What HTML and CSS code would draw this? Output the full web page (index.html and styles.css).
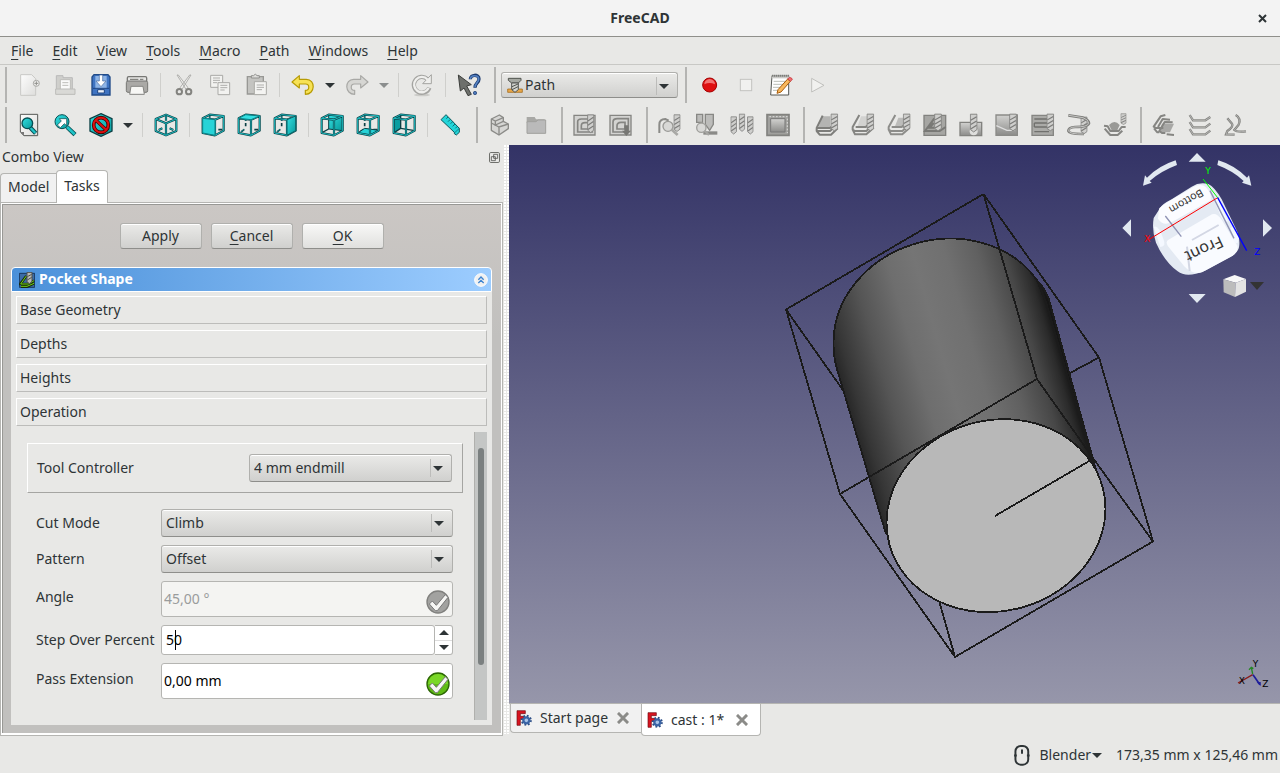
FILE: index.html
```html
<!DOCTYPE html>
<html lang="en">
<head>
<meta charset="utf-8">
<title>FreeCAD</title>
<link rel="stylesheet" href="styles.css">
</head>
<body>
<svg class="defs" aria-hidden="true">
  <defs>
    <linearGradient id="teal" x1="0" y1="0" x2="1" y2="1"><stop offset="0" stop-color="#34e0e2"/><stop offset="1" stop-color="#06989a"/></linearGradient>
    <linearGradient id="metal" x1="0" y1="0" x2="0" y2="1"><stop offset="0" stop-color="#d2d2d0"/><stop offset="1" stop-color="#8c8c8a"/></linearGradient>
    <linearGradient id="paper" x1="0" y1="0" x2="1" y2="1"><stop offset="0" stop-color="#fdfdfd"/><stop offset="1" stop-color="#dededc"/></linearGradient>
    <linearGradient id="bodyShade" gradientUnits="userSpaceOnUse" x1="831" y1="356" x2="1045" y2="294">
      <stop offset="0" stop-color="#242424"/><stop offset=".06" stop-color="#363636"/><stop offset=".2" stop-color="#555"/><stop offset=".36" stop-color="#6e6e6e"/><stop offset=".48" stop-color="#757575"/><stop offset=".62" stop-color="#707070"/><stop offset=".76" stop-color="#606060"/><stop offset=".88" stop-color="#474747"/><stop offset=".96" stop-color="#2b2b2b"/><stop offset="1" stop-color="#161616"/>
    </linearGradient>
    <symbol id="frame" viewBox="0 0 72 72">
      <g fill="none" stroke-linejoin="round">
        <path stroke="#0b3f44" stroke-width="6.5" d="M5 16L42 20V67L5 60ZM5 16L26 5L68 9L42 20M68 9V53L42 67"/>
        <path stroke="#1fc4c8" stroke-width="2.8" d="M5 16L42 20V67L5 60ZM5 16L26 5L68 9L42 20M68 9V53L42 67"/>
      </g>
    </symbol>
    <symbol id="rear" viewBox="0 0 72 72">
      <path fill="none" stroke="#0b3f44" stroke-width="5" d="M26 8V24M12 57L22 49M52 50H64M26 30V40"/>
      <path fill="none" stroke="#1fc4c8" stroke-width="1.5" d="M26 8V24M12 57L22 49"/>
    </symbol>
    <symbol id="mill" viewBox="0 0 24 72" preserveAspectRatio="none">
      <path d="M2 4H22V54L12 62L2 54Z" fill="#cfcfcd" stroke="#848482" stroke-width="3"/>
      <path d="M3 24L21 12M3 38L21 26M3 52L21 40" stroke="#7d7d7b" stroke-width="4"/>
    </symbol>
    <symbol id="logo" viewBox="0 0 48 48">
      <path d="M3 2H28V11H13V19H24V28H13V46H3Z" fill="#d81420" stroke="#6d0a10" stroke-width="2"/>
      <circle cx="31" cy="31" r="13" fill="none" stroke="#2c4d84" stroke-width="7" stroke-dasharray="5 5.2"/>
      <circle cx="31" cy="31" r="9" fill="#a9c4e8" stroke="#3a64a5" stroke-width="7"/>
    </symbol>
    <symbol id="cross" viewBox="0 0 36 36"><path d="M6 6L30 30M30 6L6 30" stroke="#8b8b88" stroke-width="9" stroke-linecap="square"/></symbol>
    <symbol id="tick" viewBox="0 0 72 72"><path d="M10 42L19 33L31 46L58 14L66 22L34 62H28Z" fill="#f6f6f4" stroke="#777" stroke-width="3"/></symbol>
  </defs>
</svg>

<header class="titlebar"><h1>FreeCAD</h1><button class="close" aria-label="Close"><svg viewBox="0 0 9 9"><path d="M1 1L8 8M8 1L1 8" stroke="#2e3436" stroke-width="2"/></svg></button></header>

<nav class="menubar">
  <button><u>F</u>ile</button><button><u>E</u>dit</button><button><u>V</u>iew</button><button><u>T</u>ools</button><button><u>M</u>acro</button><button><u>P</u>ath</button><button><u>W</u>indows</button><button><u>H</u>elp</button>
</nav>

<div class="toolbar">
  <i class="handle"></i>
  <button aria-label="New"><svg viewBox="0 0 72 72"><path d="M11 5H44L56 17V67H11Z" fill="url(#paper)" stroke="#c9c9c6" stroke-width="3"/><circle cx="58" cy="31" r="9" fill="#f4f4f2" stroke="#a5a5a2" stroke-width="3"/><path d="M58 25V37M52 31H64" stroke="#8d8d8a" stroke-width="3"/></svg></button>
  <button aria-label="Open"><svg viewBox="0 0 72 72"><path d="M10 8H30V14H58V50H10Z" fill="#cfcfcc" stroke="#bababa" stroke-width="3"/><path d="M22 20H52V50H22Z" fill="#fafafa" stroke="#bdbdba" stroke-width="3"/><path d="M28 29H46M28 37H46" stroke="#bdbdba" stroke-width="3"/><path d="M8 48H66V64H8Z" fill="#d9d9d6" stroke="#bcbcb9" stroke-width="3"/></svg></button>
  <button aria-label="Save"><svg viewBox="0 0 72 72"><path d="M15 5H57L63 12V66H9V12Z" fill="#3f74c2" stroke="#204a87" stroke-width="4"/><path d="M19 9H53V47H19Z" fill="#8db4e6"/><path d="M31 6H41V24H51L36 41L21 24H31Z" fill="#fff" stroke="#4a6b9e" stroke-width="2"/><path d="M12 46H60" stroke="#1d4481" stroke-width="3"/><path d="M26 50H46V60H26Z" fill="#edf2fa" stroke="#1d4481" stroke-width="3"/></svg></button>
  <button aria-label="Print"><svg viewBox="0 0 72 72"><rect x="7" y="11" width="58" height="16" rx="4" fill="#e4e4e2" stroke="#777774" stroke-width="4"/><rect x="4" y="24" width="64" height="34" rx="5" fill="#aaa9a6" stroke="#777774" stroke-width="3"/><path d="M15 19H40M45 19H55" stroke="#70706d" stroke-width="3"/><path d="M18 40H54L58 64H14Z" fill="#f7f7f5" stroke="#858582" stroke-width="3"/></svg></button>
  <i class="sep"></i>
  <button aria-label="Cut"><svg viewBox="0 0 72 72"><path d="M15 6L42 49L48 44L19 6ZM57 6L30 49L24 44L53 6Z" fill="#efefed" stroke="#a5a5a2" stroke-width="2.5"/><g fill="none" stroke="#83837f" stroke-width="6"><circle cx="22" cy="56" r="8"/><circle cx="50" cy="56" r="8"/></g></svg></button>
  <button aria-label="Copy"><svg viewBox="0 0 72 72"><g fill="#f2f2f0" stroke="#a9a9a6" stroke-width="3"><path d="M8 7H44V43H8Z"/><path d="M30 29H65V65H30Z"/></g><path d="M15 15H36M15 22H36M15 29H28M37 37H58M37 44H58M37 51H50" stroke="#aeaeab" stroke-width="3"/></svg></button>
  <button aria-label="Paste"><svg viewBox="0 0 72 72"><path d="M10 11H58V63H10Z" fill="#c4c4c1" stroke="#989895" stroke-width="4"/><path d="M22 15V8H29L34 3L39 8H46V15Z" fill="#dededb" stroke="#8f8f8c" stroke-width="3"/><path d="M31 26H67V65H31Z" fill="#f4f4f2" stroke="#aaaaa7" stroke-width="3"/><path d="M38 36H60M38 43H60M38 50H54" stroke="#aeaeab" stroke-width="3"/></svg></button>
  <i class="sep"></i>
  <button aria-label="Undo"><svg viewBox="0 0 72 72"><path d="M3 27L25 8V19H46C74 19 74 64 43 64V52C57 52 56 33 44 33H25V45Z" fill="#f7e256" stroke="#b79b04" stroke-width="3.5" stroke-linejoin="round"/></svg></button>
  <button class="drop" aria-label="Undo list"><i class="tri"></i></button>
  <button aria-label="Redo"><svg viewBox="0 0 72 72"><path d="M69 27L47 8V19H26C-2 19 -2 64 29 64V52C15 52 16 33 28 33H47V45Z" fill="#d6d6d3" stroke="#a8a8a5" stroke-width="3.5" stroke-linejoin="round"/></svg></button>
  <button class="drop dim" aria-label="Redo list"><i class="tri"></i></button>
  <i class="sep"></i>
  <button aria-label="Refresh"><svg viewBox="0 0 72 72"><ellipse cx="36" cy="66" rx="24" ry="4" fill="#cbcbc8"/><path d="M58 44A24 24 0 1 1 52 18" fill="none" stroke="#a4a4a1" stroke-width="13"/><path d="M64 5V32H38Z" fill="#efefed" stroke="#a4a4a1" stroke-width="3"/><path d="M56 45A23 23 0 1 1 53 20" fill="none" stroke="#efefed" stroke-width="7"/></svg></button>
  <i class="sep"></i>
  <button aria-label="What's this?"><svg viewBox="0 0 72 72"><path d="M4 6L43 35L29 39L43 64L33 68L21 45L10 54Z" fill="#6e706c" stroke="#3c3e3b" stroke-width="3"/><path d="M40 19C40 3 66 3 66 18C66 30 54 30 54 44" fill="none" stroke="#1c3a6e" stroke-width="10"/><path d="M40 18C41 5 65 5 65 18C65 29 54 30 54 43" fill="none" stroke="#5583c4" stroke-width="5"/><circle cx="54" cy="60" r="5" fill="#4a78bb" stroke="#1c3a6e" stroke-width="2"/></svg></button>
  <i class="handle"></i>
  <span class="combo workbench">
    <svg class="combo-icon" viewBox="0 0 48 48"><path d="M4 4H42V10L34 18H14L4 10Z" fill="#a5a8a2" stroke="#50534e" stroke-width="3"/><path d="M2 36H46V46H2Z" fill="#e9a94a" stroke="#9a5d0b" stroke-width="2"/><path d="M14 18H34V38L24 46L14 38Z" fill="#d3d5d0" stroke="#555753" stroke-width="3"/><path d="M15 29L33 21M15 38L33 29" stroke="#50534e" stroke-width="3"/></svg>
    <select aria-label="Workbench"><option>Path</option></select><i class="tri"></i>
  </span>
  <i class="handle"></i>
  <button aria-label="Record macro"><svg viewBox="0 0 72 72"><circle cx="38" cy="36" r="21" fill="#df0f10" stroke="#a40000" stroke-width="3"/><path d="M22 34A16 16 0 0 1 54 34Q38 26 22 34Z" fill="#f37373"/></svg></button>
  <button aria-label="Stop macro"><svg viewBox="0 0 72 72"><rect x="22" y="19" width="34" height="34" fill="#f1f1ef" stroke="#c3c3c0" stroke-width="3"/></svg></button>
  <button aria-label="Macros"><svg viewBox="0 0 72 72"><path d="M9 8H59V66H5Z" fill="#fff" stroke="#555753" stroke-width="3"/><path d="M8 6H60V16H8Z" fill="#cacac7"/><path d="M10 8H60" stroke="#555753" stroke-width="6" stroke-dasharray="3 3"/><path d="M14 25H50M13 34H42M12 43H34M12 52H28" stroke="#babdb6" stroke-width="3"/><path d="M27 50L56 18L64 25L36 57L24 61Z" fill="#f8b85d" stroke="#a85c0c" stroke-width="3"/><path d="M56 18L61 13Q70 14 70 20L64 25Z" fill="#ee6d72" stroke="#bf3035" stroke-width="2"/></svg></button>
  <button aria-label="Execute macro"><svg viewBox="0 0 72 72"><path d="M20 16V57L57 37Z" fill="#f1f1ef" stroke="#c0c0bd" stroke-width="3"/></svg></button>
</div>

<div class="toolbar">
  <i class="handle"></i>
  <button aria-label="Fit all"><svg viewBox="0 0 72 72"><path d="M10 4H62V68H21L10 57Z" fill="url(#paper)" stroke="#555753" stroke-width="3"/><path d="M10 57H21V68Z" fill="#777"/><path d="M38 42L56 61" stroke="#064f53" stroke-width="13"/><path d="M38 42L55 60" stroke="#1fc4c8" stroke-width="7"/><circle cx="31" cy="31" r="16" fill="url(#teal)" stroke="#064f53" stroke-width="4"/></svg></button>
  <button aria-label="Fit selection"><svg viewBox="0 0 72 72"><path d="M42 42L66 65" stroke="#064f53" stroke-width="13"/><path d="M42 42L65 64" stroke="#1fc4c8" stroke-width="8"/><circle cx="27" cy="26" r="21" fill="url(#teal)" stroke="#064f53" stroke-width="3"/><path d="M13 36L25 24L19 17H41V38L34 32L22 44Z" fill="#fff" stroke="#0b3f44" stroke-width="2"/></svg></button>
  <button aria-label="Draw style"><svg viewBox="0 0 72 72"><path d="M36 2L69 17V54L36 70L3 54V17Z" fill="url(#teal)" stroke="#0b3f44" stroke-width="4"/><g fill="none"><circle cx="36" cy="36" r="22" stroke="#450000" stroke-width="11"/><path d="M20 21L52 51" stroke="#450000" stroke-width="10"/><circle cx="36" cy="36" r="22" stroke="#dc1010" stroke-width="6"/><path d="M20 21L52 51" stroke="#dc1010" stroke-width="6"/></g></svg></button>
  <button class="drop" aria-label="Draw styles"><i class="tri"></i></button>
  <i class="sep"></i>
  <button aria-label="Isometric"><svg viewBox="0 0 72 72"><g fill="none" stroke-linejoin="round"><path stroke="#0b3f44" stroke-width="6.5" d="M36 5L67 18V54L36 67L5 54V18ZM5 18L36 31L67 18M36 31V67M36 9V23M14 51L25 46M58 51L47 46"/><path stroke="#1fc4c8" stroke-width="2.8" d="M36 5L67 18V54L36 67L5 54V18ZM5 18L36 31L67 18M36 31V67M36 9V23M14 51L25 46M58 51L47 46"/></g></svg></button>
  <i class="sep"></i>
  <button aria-label="Front"><svg viewBox="0 0 72 72"><use href="#rear"/><use href="#frame"/><path d="M5 16L42 20V67L5 60Z" fill="#27d3d7" stroke="#0c7f83" stroke-width="3"/></svg></button>
  <button aria-label="Top"><svg viewBox="0 0 72 72"><use href="#rear"/><use href="#frame"/><path d="M5 16L26 5L68 9L42 20Z" fill="#34e0e2" stroke="#0c7f83" stroke-width="3"/></svg></button>
  <button aria-label="Right"><svg viewBox="0 0 72 72"><use href="#rear"/><use href="#frame"/><path d="M42 20L68 9V53L42 67Z" fill="url(#teal)" stroke="#0b5f63" stroke-width="3"/></svg></button>
  <i class="sep"></i>
  <button aria-label="Rear"><svg viewBox="0 0 72 72"><path d="M26 6L68 9V53L26 48Z" fill="url(#teal)" stroke="#0b3f44" stroke-width="3"/><path d="M6 59L26 48" stroke="#0b3f44" stroke-width="4"/><use href="#frame"/></svg></button>
  <button aria-label="Bottom"><svg viewBox="0 0 72 72"><use href="#rear"/><path d="M5 60L26 46L68 52L42 67Z" fill="#27d3d7" stroke="#0b3f44" stroke-width="3"/><use href="#frame"/></svg></button>
  <button aria-label="Left"><svg viewBox="0 0 72 72"><path d="M5 16L26 6V46L5 60Z" fill="#0a9ea1" stroke="#0b3f44" stroke-width="4"/><path d="M26 46L64 52" stroke="#0b3f44" stroke-width="4"/><use href="#frame"/></svg></button>
  <i class="sep"></i>
  <button aria-label="Measure distance"><svg viewBox="0 0 72 72"><path d="M6 20L21 5L61 46V58L52 66L46 62V58Z" fill="#23d5d9" stroke="#0b5b60" stroke-width="3" stroke-linejoin="round"/><path d="M27 12L22 17M34 19L27 26M41 26L35 32M48 33L41 40M55 40L49 46" stroke="#0b5b60" stroke-width="2.5"/><path d="M61 46L46 60" stroke="#0b5b60" stroke-width="2"/></svg></button>
  <i class="handle"></i>
  <button aria-label="Part"><svg viewBox="0 0 72 72"><path d="M10 18L34 6L46 14V25L61 33V47L33 66L10 52Z" fill="#d6d6d4" stroke="#8b8b88" stroke-width="4" stroke-linejoin="round"/><path d="M10 30L33 42L61 33M33 42V65M10 18L22 24L46 14M22 24V36L46 25" fill="none" stroke="#8b8b88" stroke-width="4"/></svg></button>
  <button aria-label="Group"><svg viewBox="0 0 72 72"><path d="M8 12H32L36 19H62V30H8Z" fill="#a8a8a5"/><path d="M9 26H36L42 21H65V61H9Z" fill="#bababa" stroke="#a0a09d" stroke-width="3"/></svg></button>
  <i class="handle"></i>
  <button aria-label="Path job"><svg viewBox="0 0 72 72"><path d="M3 7H66V66H3Z" fill="#d3d3d1" stroke="#858582" stroke-width="4"/><path d="M14 57V26Q14 18 25 18H58V57ZM25 48V38Q25 29 36 29H48V48Z" fill="none" stroke="#858582" stroke-width="5"/><use href="#mill" x="42" y="2" width="22" height="66"/></svg></button>
  <button aria-label="Export job"><svg viewBox="0 0 72 72"><path d="M3 7H66V66H3Z" fill="#d3d3d1" stroke="#858582" stroke-width="4"/><path d="M12 57V27Q12 17 25 17H58V57ZM24 48V39Q24 28 36 28H48V48Z" fill="none" stroke="#858582" stroke-width="5"/><path d="M46 37H58V53H66L52 69L39 53H46Z" fill="#777774"/></svg></button>
  <i class="handle"></i>
  <button aria-label="Inspect"><svg viewBox="0 0 72 72"><path d="M4 60V35Q4 18 22 18L32 23" fill="none" stroke="#8a8a87" stroke-width="6"/><use href="#mill" x="46" y="2" width="22" height="62"/><circle cx="30" cy="40" r="15" fill="#d8d8d6" stroke="#9a9a97" stroke-width="4"/><path d="M40 49L59 66" stroke="#a8a8a5" stroke-width="8"/></svg></button>
  <button aria-label="Simulate"><svg viewBox="0 0 72 72"><path d="M8 4H26V28H8ZM34 4H58V34L47 52L34 34Z" fill="#bcbcba" stroke="#888885" stroke-width="4"/><path d="M28 60H70" stroke="#8a8a87" stroke-width="10"/><circle cx="22" cy="44" r="14" fill="#d8d8d6" stroke="#a0a09d" stroke-width="4"/><path d="M31 53L45 66" stroke="#a6a6a3" stroke-width="7"/></svg></button>
  <button aria-label="Tools"><svg viewBox="0 0 72 72"><use href="#mill" x="1" y="8" width="20" height="64"/><use href="#mill" x="26" y="0" width="20" height="64"/><use href="#mill" x="51" y="8" width="20" height="64"/></svg></button>
  <button aria-label="Fixture"><svg viewBox="0 0 72 72"><path d="M3 5H69V67H3Z" fill="#a0a09d" stroke="#82827f" stroke-width="5"/><path d="M14 17H57V57H14Z" fill="url(#metal)" stroke="#777" stroke-width="3"/><path d="M10 11H64V60" fill="none" stroke="#ddd" stroke-width="3" stroke-dasharray="5 5"/></svg></button>
  <i class="handle"></i>
  <button aria-label="Contour"><svg viewBox="0 0 72 72"><path d="M22 10H46V45H10Z" fill="#b4b4b2"/><path d="M23 8L5 45H45L66 28M5 45V54H45L66 36M5 54L14 65H48L68 46" fill="none" stroke="#7d7d7a" stroke-width="6" stroke-linejoin="round"/><use href="#mill" x="46" y="0" width="24" height="62"/></svg></button>
  <button aria-label="Profile from faces"><svg viewBox="0 0 72 72"><path d="M30 10H50V45H18Z" fill="#d2d2d0"/><path d="M25 6L5 42V50L12 54H46L66 36M5 50L12 64H46L68 44M14 42H44L60 28" fill="none" stroke="#858582" stroke-width="6" stroke-linejoin="round"/><use href="#mill" x="46" y="0" width="24" height="62"/></svg></button>
  <button aria-label="Profile from edges"><svg viewBox="0 0 72 72"><path d="M34 14H56V40H24Z" fill="#bcbcba"/><path d="M25 6L5 42V50L12 54H46L66 36M5 50L12 64H46L68 44M14 42H44L60 28" fill="none" stroke="#8d8d8a" stroke-width="6" stroke-linejoin="round"/><use href="#mill" x="47" y="0" width="24" height="60"/></svg></button>
  <button aria-label="Pocket shape"><svg viewBox="0 0 72 72"><path d="M3 7H68V67H3Z" fill="#a6a6a3" stroke="#82827f" stroke-width="4"/><path d="M34 16L6 54H50L68 42M32 30L20 44H46" fill="none" stroke="#797976" stroke-width="6"/><use href="#mill" x="33" y="0" width="24" height="62"/></svg></button>
  <button aria-label="Drilling"><svg viewBox="0 0 72 72"><path d="M3 28H68V68H3Z" fill="url(#metal)" stroke="#82827f" stroke-width="4"/><circle cx="44" cy="55" r="12" fill="#dededc"/><use href="#mill" x="32" y="0" width="24" height="66"/></svg></button>
  <button aria-label="Mill face"><svg viewBox="0 0 72 72"><path d="M3 6H67V67H3Z" fill="url(#metal)" stroke="#8b8b88" stroke-width="4"/><path d="M4 38L36 52H58" fill="none" stroke="#dedede" stroke-width="4"/><use href="#mill" x="42" y="0" width="24" height="62"/></svg></button>
  <button aria-label="Helix"><svg viewBox="0 0 72 72"><path d="M3 7H67V67H3Z" fill="#aaaaa7" stroke="#858582" stroke-width="4"/><path d="M10 18H48M10 30H48M10 42H48M10 56H54M10 30V42" fill="none" stroke="#70706d" stroke-width="4"/><use href="#mill" x="46" y="0" width="24" height="62"/></svg></button>
  <button aria-label="Adaptive"><svg viewBox="0 0 72 72"><use href="#mill" x="40" y="9" width="22" height="62"/><path d="M4 7L48 14Q66 20 66 31Q64 42 24 42Q4 43 4 54Q6 64 51 63" fill="none" stroke="#7e7e7b" stroke-width="8"/><path d="M5 7L48 14Q65 20 65 31Q62 42 24 42Q5 43 5 54Q8 64 50 63" fill="none" stroke="#c5c5c3" stroke-width="3"/></svg></button>
  <button aria-label="3D surface"><svg viewBox="0 0 72 72"><use href="#mill" x="52" y="0" width="19" height="40"/><path d="M18 36Q35 18 50 36L42 54H27Z" fill="#999996"/><path d="M3 38L14 40L22 54H47L56 42H68M5 47L22 66H44L58 53" fill="none" stroke="#858582" stroke-width="6" stroke-linejoin="round"/></svg></button>
  <i class="handle"></i>
  <button aria-label="Dress-up"><svg viewBox="0 0 72 72"><path d="M30 32H66L54 58H24Z" fill="#a8a8a6"/><path d="M40 6L26 10L5 41L12 45H34M54 20L32 18L18 42M62 28L38 27L22 54L30 60H40M44 64L66 66M6 46L16 58H22" fill="none" stroke="#858582" stroke-width="6" stroke-linejoin="round"/></svg></button>
  <button aria-label="Copy path"><svg viewBox="0 0 72 72"><g fill="none" stroke="#858582" stroke-width="7"><path d="M5 6L15 22H52L67 12M5 27L15 43H52L67 32M5 48L15 64H52L67 53"/></g><g fill="none" stroke="#cacac8" stroke-width="2"><path d="M5 6L15 22H52L67 12M5 27L15 43H52L67 32M5 48L15 64H52L67 53"/></g></svg></button>
  <button aria-label="Array"><svg viewBox="0 0 72 72"><g fill="none" stroke="#80807d" stroke-width="7"><path d="M10 16L24 32Q30 40 10 54L6 64L32 65"/><path d="M35 6Q52 16 44 35L31 51Q38 58 66 55"/></g><g fill="none" stroke="#c4c4c2" stroke-width="2"><path d="M10 16L24 32Q30 40 10 54L6 64L32 65M35 6Q52 16 44 35L31 51Q38 58 66 55"/></g></svg></button>
</div>

<main class="workspace">
  <section class="dock">
    <header class="dock-title"><h2>Combo View</h2><button class="float" aria-label="Float panel"><svg viewBox="0 0 33 33"><rect x="1.5" y="1.5" width="30" height="30" rx="4" fill="none" stroke="#6f706c" stroke-width="3"/><path d="M14 7H26V19H14ZM7 14H19V26H7Z" fill="#e8e8e6" stroke="#555753" stroke-width="2.5"/></svg></button></header>
    <div class="tabs" role="tablist"><button role="tab">Model</button><button role="tab" class="active" aria-selected="true">Tasks</button></div>
    <div class="pane">
      <div class="tasks">
        <div class="actions"><button>Apply</button><button><u>C</u>ancel</button><button class="default"><u>O</u>K</button></div>
        <section class="task">
          <header class="task-head">
            <svg class="task-icon" viewBox="0 0 48 48"><path d="M1 4H47V46H1Z" fill="#3b6ca6" stroke="#17365c" stroke-width="3"/><path d="M22 12L4 36H28L45 26M45 34L24 44H6" fill="none" stroke="#172a0a" stroke-width="8"/><path d="M22 12L5 36H28L45 26M45 34L24 43H6" fill="none" stroke="#73d216" stroke-width="3"/><path d="M24 1H39V28L32 35L24 30Z" fill="#b9bbb6" stroke="#4d4f4b" stroke-width="3"/><path d="M25 14L38 7M25 24L38 16" stroke="#4d4f4b" stroke-width="3"/></svg>
            <h3>Pocket Shape</h3>
            <button class="fold" aria-label="Collapse"><svg viewBox="0 0 42 42"><circle cx="21" cy="21" r="19" fill="#f0f0f0" stroke="#fff" stroke-width="3"/><path d="M13 20L21 12L29 20M13 30L21 22L29 30" fill="none" stroke="#3b82cf" stroke-width="4"/></svg></button>
          </header>
          <div class="task-body">
            <button class="page">Base Geometry</button>
            <button class="page">Depths</button>
            <button class="page">Heights</button>
            <button class="page">Operation</button>
            <div class="scroll">
              <form class="form">
                <div class="group">
                  <label for="tool">Tool Controller</label>
                  <span class="combo"><select id="tool"><option>4 mm endmill</option></select><i class="tri"></i></span>
                </div>
                <div class="rows">
                  <label for="cut">Cut Mode</label>
                  <span class="combo"><select id="cut"><option>Climb</option></select><i class="tri"></i></span>
                  <label for="pattern">Pattern</label>
                  <span class="combo"><select id="pattern"><option>Offset</option></select><i class="tri"></i></span>
                  <label class="raised" for="angle">Angle</label>
                  <span class="field"><input id="angle" type="text" value="45,00 °" disabled><svg class="state" viewBox="0 0 72 72"><circle cx="36" cy="36" r="33" fill="#a2a2a0" stroke="#80807e" stroke-width="4"/><use href="#tick"/></svg></span>
                  <label for="step">Step Over Percent</label>
                  <span class="spin"><input id="step" type="text" value="50"><i class="caret"></i><span class="steps"><button type="button" aria-label="Increase"><i class="tri up"></i></button><button type="button" aria-label="Decrease"><i class="tri"></i></button></span></span>
                  <label class="raised" for="pass">Pass Extension</label>
                  <span class="field"><input id="pass" type="text" value="0,00 mm"><svg class="state" viewBox="0 0 72 72"><circle cx="36" cy="36" r="33" fill="#5fbb14" stroke="#2c6604" stroke-width="4"/><path d="M6 36A30 30 0 0 1 66 36Z" fill="#7ad728"/><use href="#tick"/></svg></span>
                </div>
              </form>
              <div class="scrollbar"><i class="thumb"></i></div>
            </div>
          </div>
        </section>
      </div>
    </div>
  </section>
  <div class="splitter"></div>
  <section class="document">
    <div class="view">
      <svg class="model" viewBox="509 145 771 558" role="img" aria-label="Cylinder with bounding box">
        <g shape-rendering="crispEdges" stroke="#1b1b1b" stroke-width="1.8" fill="none">
          <path d="M1099 357.5L1070 373M786 309.5L844 391.5M955 657L939.5 602.5"/>
          <path d="M886 534L837 369Q833.5 357 833.5 343A110.4 96.4 -15 0 1 1036 279Q1048 291 1051 307L1096 470L996 516Z" fill="url(#bodyShade)" stroke="none"/>
          <path d="M886 534L837 369Q833.5 357 833.5 343A110.4 96.4 -15 0 1 1036 279Q1048 291 1051 307L1096 470"/>
          <path stroke-width="2.2" d="M1037 280L1046 303L1093 464"/>
          <ellipse cx="996" cy="515.7" rx="110.4" ry="95.4" transform="rotate(-15 996 515.7)" fill="#b8b8b8"/>
          <path d="M995 516L1091 460M983.5 194L786 309.5L840 494L1037 379L983.5 194L1099 357.5L1153 541.5L955 657L840 494M1037 379L1093 458L1153 541.5"/>
        </g>
      </svg>
      <svg class="navcube" viewBox="0 0 510 495" role="img" aria-label="Navigation cube">
        <g fill="#e1e8f0">
          <path d="M236 50L261 24L287 50ZM236 447L287 447L261 474ZM63 223V275L37 249ZM459 223V275L486 249Z"/>
          <path d="M197 46L201 60Q151 79 119 108L125 113L99 122L105 91L111 98Q147 62 197 46ZM325 46L322 60Q370 78 401 108L396 113L424 122L417 91L411 98Q372 60 325 46Z"/>
        </g>
        <path d="M150 190Q155 178 185 163L245 125Q268 110 295 117Q313 125 335 163L377 250Q392 280 387 307Q385 320 367 332L285 377Q230 400 203 379Q164 351 138 293Q125 257 131 219Z" fill="#e4eaf3"/>
        <path d="M147 192Q150 184 185 164L244 130Q272 112 288 127Q306 147 302 166L190 229Q160 246 144 221Z" fill="#fbfcff"/>
        <path d="M174 285L306 208Q320 202 335 224L382 302Q387 322 363 335L276 382Q246 390 222 363L174 304Q166 291 174 285Z" fill="#f9fbff"/>
        <path d="M131 246Q145 238 160 281Q170 304 151 306ZM309 158L325 162L354 229Q339 237 326 198ZM362 249Q374 240 385 273Q388 305 372 290Z" fill="#f4f8ff"/>
        <path d="M166 213L214 275M300 137L372 280" stroke="#8f93b4" stroke-width="4"/>
        <path d="M246 285L326 240M231 305L239 378" stroke="#d3d7e4" stroke-width="6"/>
        <text class="face" transform="translate(330 272) rotate(155)">Front</text>
        <text class="face small" transform="translate(272 131) rotate(150)">Bottom</text>
        <path d="M116 284L323 158" stroke="#f00" stroke-width="3"/>
        <path d="M279 102L323 158" stroke="#0f0" stroke-width="3"/>
        <path d="M323 158L410 317" stroke="#00f" stroke-width="4"/>
        <text class="axis" x="103" y="291" fill="#f00">X</text><text class="axis" x="286" y="87" fill="#0f0">Y</text><text class="axis" x="433" y="330" fill="#00f">Z</text>
        <path d="M340 403L374 390L408 402L377 413Z" fill="#f8f8f8"/><path d="M340 403L377 413L375 456L341 442Z" fill="#bcbcbc"/><path d="M377 413L408 402V440L375 456Z" fill="#e3e3e3"/>
        <path d="M420 411H462L441 435Z" fill="#333"/>
      </svg>
      <svg class="axes" viewBox="0 0 99 99" role="img" aria-label="Axis cross">
        <path d="M50 47L6 72" stroke="#8b1a1a" stroke-width="4"/><path d="M50 45L46 25M39 32L46 25L52 29" stroke="#238623" stroke-width="4" fill="none"/><path d="M51 47L72 77" stroke="#1d1d9b" stroke-width="5"/><path d="M62 70L74 81L74 69Z" fill="#1d1d9b"/>
        <text class="axis" x="8" y="74">X</text><text class="axis" x="50" y="23">Y</text><text class="axis" x="79" y="83">Z</text>
      </svg>
    </div>
    <div class="doc-tabs"><div class="doc-tab"><svg class="logo"><use href="#logo"/></svg><span>Start page</span><button aria-label="Close Start page"><svg><use href="#cross"/></svg></button></div><div class="doc-tab active"><svg class="logo"><use href="#logo"/></svg><span>cast : 1*</span><button aria-label="Close cast"><svg><use href="#cross"/></svg></button></div></div>
  </section>
</main>

<footer class="status">
  <svg class="mouse" viewBox="0 0 48 64"><rect x="4" y="3" width="39" height="57" rx="16" fill="none" stroke="#2e3436" stroke-width="6"/><path d="M24 14V27" stroke="#2e3436" stroke-width="6"/><path d="M4 29V35M43 29V35" stroke="#2e3436" stroke-width="8"/></svg>
  <button>Blender<i class="tri"></i></button>
  <span>173,35 mm x 125,46 mm</span>
</footer>
</body>
</html>
```
FILE: styles.css
```css
* { box-sizing: border-box; }
body {
  margin: 0;
  min-height: 100vh;
  display: flex;
  flex-direction: column;
  background: #e8e8e6;
  color: #2e3436;
  font: 14px/20px "Noto Sans", "Open Sans", sans-serif;
}
button, input, select { font: inherit; color: inherit; margin: 0; }
button { border: 0; padding: 0; background: none; }
h1, h2, h3 { margin: 0; font-size: 14px; }
h2 { font-weight: normal; }
svg { display: block; }
u { text-underline-offset: 3px; text-decoration-thickness: 1px; }
.defs { position: absolute; width: 0; height: 0; }
.tri {
  display: block;
  width: 0;
  height: 0;
  border: 5px solid transparent;
  border-top-color: #2e3436;
  border-bottom: 0;
}
.tri.up { border-top: 0; border-bottom: 5px solid #2e3436; }

.titlebar {
  display: grid;
  grid-template-columns: 36px 1fr 36px;
  align-items: center;
  height: 37px;
  background: #f3f3f3;
  border-bottom: 1px solid #8f8f8b;
}
.titlebar h1 { grid-column: 2; text-align: center; }
.close { justify-self: center; }
.close svg { width: 9px; height: 9px; }

.menubar {
  display: flex;
  gap: 1px;
  height: 28px;
  padding: 0 2px;
  border-bottom: 1px solid #c8c8c5;
}
.menubar button { padding: 0 9px; }

.toolbar { display: flex; align-items: center; height: 40px; }
.toolbar button { flex: none; width: 36px; height: 36px; display: grid; place-items: center; }
.toolbar button svg { width: 24px; height: 24px; }
.toolbar .drop { width: 18px; }
.dim { opacity: .5; }
.handle { flex: none; width: 2px; height: 36px; margin: 0 4px 0 7px; background: #b4b4b2; }
.handle:first-child { margin-left: 5px; }
.sep { flex: none; width: 1px; height: 24px; margin: 0 5px; background: #cfcfcc; }

.combo { position: relative; display: block; }
.combo select {
  appearance: none;
  display: block;
  width: 100%;
  height: 28px;
  padding: 0 30px 0 4px;
  border: 1px solid #b0b0ad;
  border-bottom-color: #8e8e8b;
  border-radius: 3px;
  background: linear-gradient(#eaeae8, #d0d0ce);
  box-shadow: inset 0 1px #fff;
}
.combo .tri { position: absolute; right: 9px; top: 12px; pointer-events: none; }
.combo::after { content: ""; position: absolute; right: 21px; top: 5px; width: 1px; height: 18px; background: #bcbcba; }
.workbench { width: 177px; margin-left: 1px; }
.workbench select { height: 26px; padding-left: 23px; }
.combo-icon { position: absolute; left: 6px; top: 5px; width: 16px; height: 16px; }

.workspace { flex: 1; display: flex; min-height: 592px; }
.dock { flex: none; width: 503px; display: flex; flex-direction: column; }
.dock-title { display: flex; align-items: center; height: 25px; padding: 0 3px 1px 2px; }
.dock-title h2 { flex: 1; }
.float svg { width: 11px; height: 11px; }
.tabs { display: flex; align-items: flex-end; position: relative; height: 33px; margin-bottom: -1px; }
.tabs button { height: 30px; padding: 0 7px 2px; border: 1px solid #b5b5b2; border-right: 0; border-radius: 4px 0 0 0; background: #f1f1f1; }
.tabs .active { height: 33px; padding: 0 7px 2px; border-right: 1px solid #b5b5b2; border-bottom: 0; border-radius: 4px 4px 0 0; background: #fff; }
.pane { flex: 1; display: flex; margin-bottom: 1px; padding: 1px 1px 2px; border: 1px solid #b5b5b2; background: #fff; }
.tasks { flex: 1; display: flex; flex-direction: column; padding: 18px 9px 8px 8px; border: 1px solid #989895; border-width: 1px 0 0 1px; background: linear-gradient(#cbc7c4, #c1c0be 25%); }
.actions { display: flex; justify-content: center; gap: 9px; margin-bottom: 18px; }
.actions button { width: 82px; height: 26px; border: 1px solid #b0b0ad; border-bottom-color: #8e8e8b; border-radius: 3px; background: linear-gradient(#eaeae8, #d0d0ce); box-shadow: inset 0 1px #fff; }
.actions .default { background: linear-gradient(#f8f8f7, #e0e0de); }
.task { flex: 1; display: flex; flex-direction: column; }
.task-head { display: flex; align-items: center; gap: 4px; height: 25px; padding: 0 3px 0 7px; border: 1px solid #fff; border-radius: 4px 4px 0 0; background: linear-gradient(90deg, #4a90d9, #9dcdff); }
.task-head h3 { flex: 1; padding-bottom: 2px; color: #fff; }
.task-icon { width: 16px; height: 16px; }
.fold svg { width: 14px; height: 14px; }
.task-body { flex: 1; display: flex; flex-direction: column; gap: 6px; padding: 4px 5px 5px; background: #e8e8e6; }
.page { height: 28px; padding: 0 3px; text-align: left; border: 1px solid #fff; border-right-color: #bcbcba; border-bottom-color: #bcbcba; }
.scroll { flex: 1; display: flex; justify-content: space-between; }
.form { flex: 1; padding: 11px 21px 0 11px; }
.group { display: grid; grid-template-columns: 212px 1fr; align-items: center; height: 50px; margin: 0 -10px 16px 0; padding: 0 10px 0 9px; border: 1px solid #fff; border-right-color: #a5a5a2; border-bottom-color: #a5a5a2; }
.rows { display: grid; grid-template-columns: 125px 1fr; row-gap: 8px; align-items: center; padding-left: 9px; }
.raised { padding-bottom: 4px; }
.field { position: relative; display: block; }
.field input, .spin input { display: block; width: 100%; height: 36px; padding: 0 32px 2px 2px; border: 1px solid #b5b5b2; border-radius: 3px; background: #fff; color: #000; }
.field input:disabled { background: #f4f4f2; color: #9a9c9c; }
.state { position: absolute; right: 3px; top: 9px; width: 24px; height: 24px; }
.spin { position: relative; display: flex; }
.spin input { flex: 1; width: 0; height: 30px; padding: 0 4px 2px; }
.caret { position: absolute; left: 14px; top: 5px; width: 1px; height: 20px; background: #000; }
.steps { width: 18px; display: flex; flex-direction: column; border: 1px solid #b5b5b2; border-left: 0; border-radius: 0 3px 3px 0; background: #fff; }
.steps button { flex: 1; display: grid; place-items: center; }
.steps button + button { border-top: 1px solid #ddd; }
.scrollbar { width: 13px; padding: 16px 3px 0 3px; border-left: 1px solid #b0b0ad; background: #c4c6c5; }
.thumb { display: block; width: 6px; height: 217px; border-radius: 3px; background: #7b8080; }

.splitter { flex: none; width: 6px; margin-bottom: 3px; background: radial-gradient(circle at 1px 1px, #fff 1px, transparent 1px) 1px 0 / 3px 3px; }

.document { flex: 1; display: flex; flex-direction: column; min-width: 0; }
.view { position: relative; flex: 1; display: flex; min-height: 0; background: linear-gradient(#333366, #9696aa); }
.model { flex: 1; width: 100%; min-width: 0; }
.navcube { position: absolute; right: 0; top: 0; width: 170px; height: 165px; }
.face { font: 48px "Noto Sans", sans-serif; fill: #333; }
.small { font-size: 32px; }
.axis { font: 27px "DejaVu Sans", sans-serif; }
.axes { position: absolute; right: 11px; bottom: 11px; width: 33px; height: 33px; }
.doc-tabs { display: flex; align-items: flex-start; height: 34px; padding-left: 1px; border-top: 1px solid #b5b5b2; }
.doc-tab { display: flex; align-items: center; height: 29px; padding: 0 12px 0 5px; border: 1px solid #b5b5b2; border-top: 0; border-right: 0; border-radius: 0 0 0 4px; background: #f1f1f1; }
.doc-tab.active { height: 32px; border-right: 1px solid #b5b5b2; border-radius: 0 0 4px 4px; background: #fff; }
.doc-tab .logo { width: 16px; height: 16px; margin-right: 8px; }
.doc-tab span { margin-right: 9px; }
.doc-tab.active span { margin-right: 12px; }
.doc-tab button svg { width: 12px; height: 12px; }

.status { display: flex; justify-content: flex-end; align-items: center; height: 36px; padding: 0 2px; }
.status button { display: flex; align-items: center; gap: 1px; margin: 0 14px 0 10px; }
.mouse { width: 16px; height: 21px; }
```
